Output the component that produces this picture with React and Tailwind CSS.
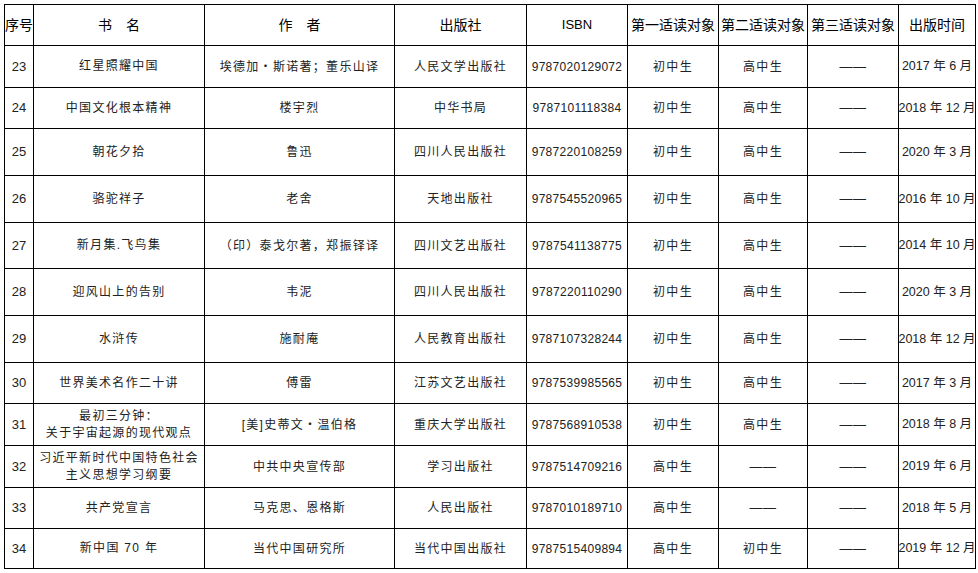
import React from "react";

const rows = [
  ["23", ["红星照耀中国"], "埃德加・斯诺著；董乐山译", "人民文学出版社", "9787020129072", "初中生", "高中生", "——", "2017 年 6 月"],
  ["24", ["中国文化根本精神"], "楼宇烈", "中华书局", "9787101118384", "初中生", "高中生", "——", "2018 年 12 月"],
  ["25", ["朝花夕拾"], "鲁迅", "四川人民出版社", "9787220108259", "初中生", "高中生", "——", "2020 年 3 月"],
  ["26", ["骆驼祥子"], "老舍", "天地出版社", "9787545520965", "初中生", "高中生", "——", "2016 年 10 月"],
  ["27", ["新月集.飞鸟集"], "（印）泰戈尔著，郑振铎译", "四川文艺出版社", "9787541138775", "初中生", "高中生", "——", "2014 年 10 月"],
  ["28", ["迎风山上的告别"], "韦泥", "四川人民出版社", "9787220110290", "初中生", "高中生", "——", "2020 年 3 月"],
  ["29", ["水浒传"], "施耐庵", "人民教育出版社", "9787107328244", "初中生", "高中生", "——", "2018 年 12 月"],
  ["30", ["世界美术名作二十讲"], "傅雷", "江苏文艺出版社", "9787539985565", "初中生", "高中生", "——", "2017 年 3 月"],
  ["31", ["最初三分钟：", "关于宇宙起源的现代观点"], "[美]史蒂文・温伯格", "重庆大学出版社", "9787568910538", "初中生", "高中生", "——", "2018 年 8 月"],
  ["32", ["习近平新时代中国特色社会", "主义思想学习纲要"], "中共中央宣传部", "学习出版社", "9787514709216", "高中生", "——", "——", "2019 年 6 月"],
  ["33", ["共产党宣言"], "马克思、恩格斯", "人民出版社", "9787010189710", "高中生", "——", "——", "2018 年 5 月"],
  ["34", ["新中国 70 年"], "当代中国研究所", "当代中国出版社", "9787515409894", "高中生", "初中生", "——", "2019 年 12 月"],
];

const headers = ["序号", "书　名", "作　者", "出版社", "ISBN", "第一适读对象", "第二适读对象", "第三适读对象", "出版时间"];

const cjk = "font-['Liberation_Sans','Noto_Sans_CJK_SC',sans-serif]";

export default function App() {
  return (
    <div className="min-h-screen bg-white pl-[4px] pt-[4px]">
      <div
        className={`grid w-fit gap-px bg-black p-px ${cjk} grid-cols-[28px_170px_189px_131px_100px_90px_88px_90px_76px] grid-rows-[40px_41px_40px_46px_46px_45px_46px_46px_40px_41px_41px_40px_39px]`}
      >
        {headers.map((h, i) => (
          <div
            key={h}
            className={`flex items-center justify-center bg-white text-black whitespace-nowrap ${i === 4 ? "text-[13px]" : "text-[14px]"}`}
          >
            {h}
          </div>
        ))}
        {rows.map((r) => (
          <React.Fragment key={r[0]}>
            <div className="flex items-center justify-center bg-white text-[13px] text-[#222]">{r[0]}</div>
            <div className="flex flex-col items-center justify-center bg-white text-[12px] leading-[17px] tracking-[1.3px] text-[#222] whitespace-nowrap">
              {r[1].map((l) => (
                <span key={l}>{l}</span>
              ))}
            </div>
            {r.slice(2).map((c, j) => (
              <div
                key={j}
                className={`flex items-center justify-center bg-white text-[#222] whitespace-nowrap ${
                  j === 2
                    ? "text-[12px] tracking-[0.3px]"
                    : j === 6
                    ? "text-[12.5px]"
                    : c === "——"
                    ? "text-[13px] tracking-[0.5px]"
                    : "text-[12px] tracking-[1.3px]"
                }`}
              >
                {c}
              </div>
            ))}
          </React.Fragment>
        ))}
      </div>
    </div>
  );
}
